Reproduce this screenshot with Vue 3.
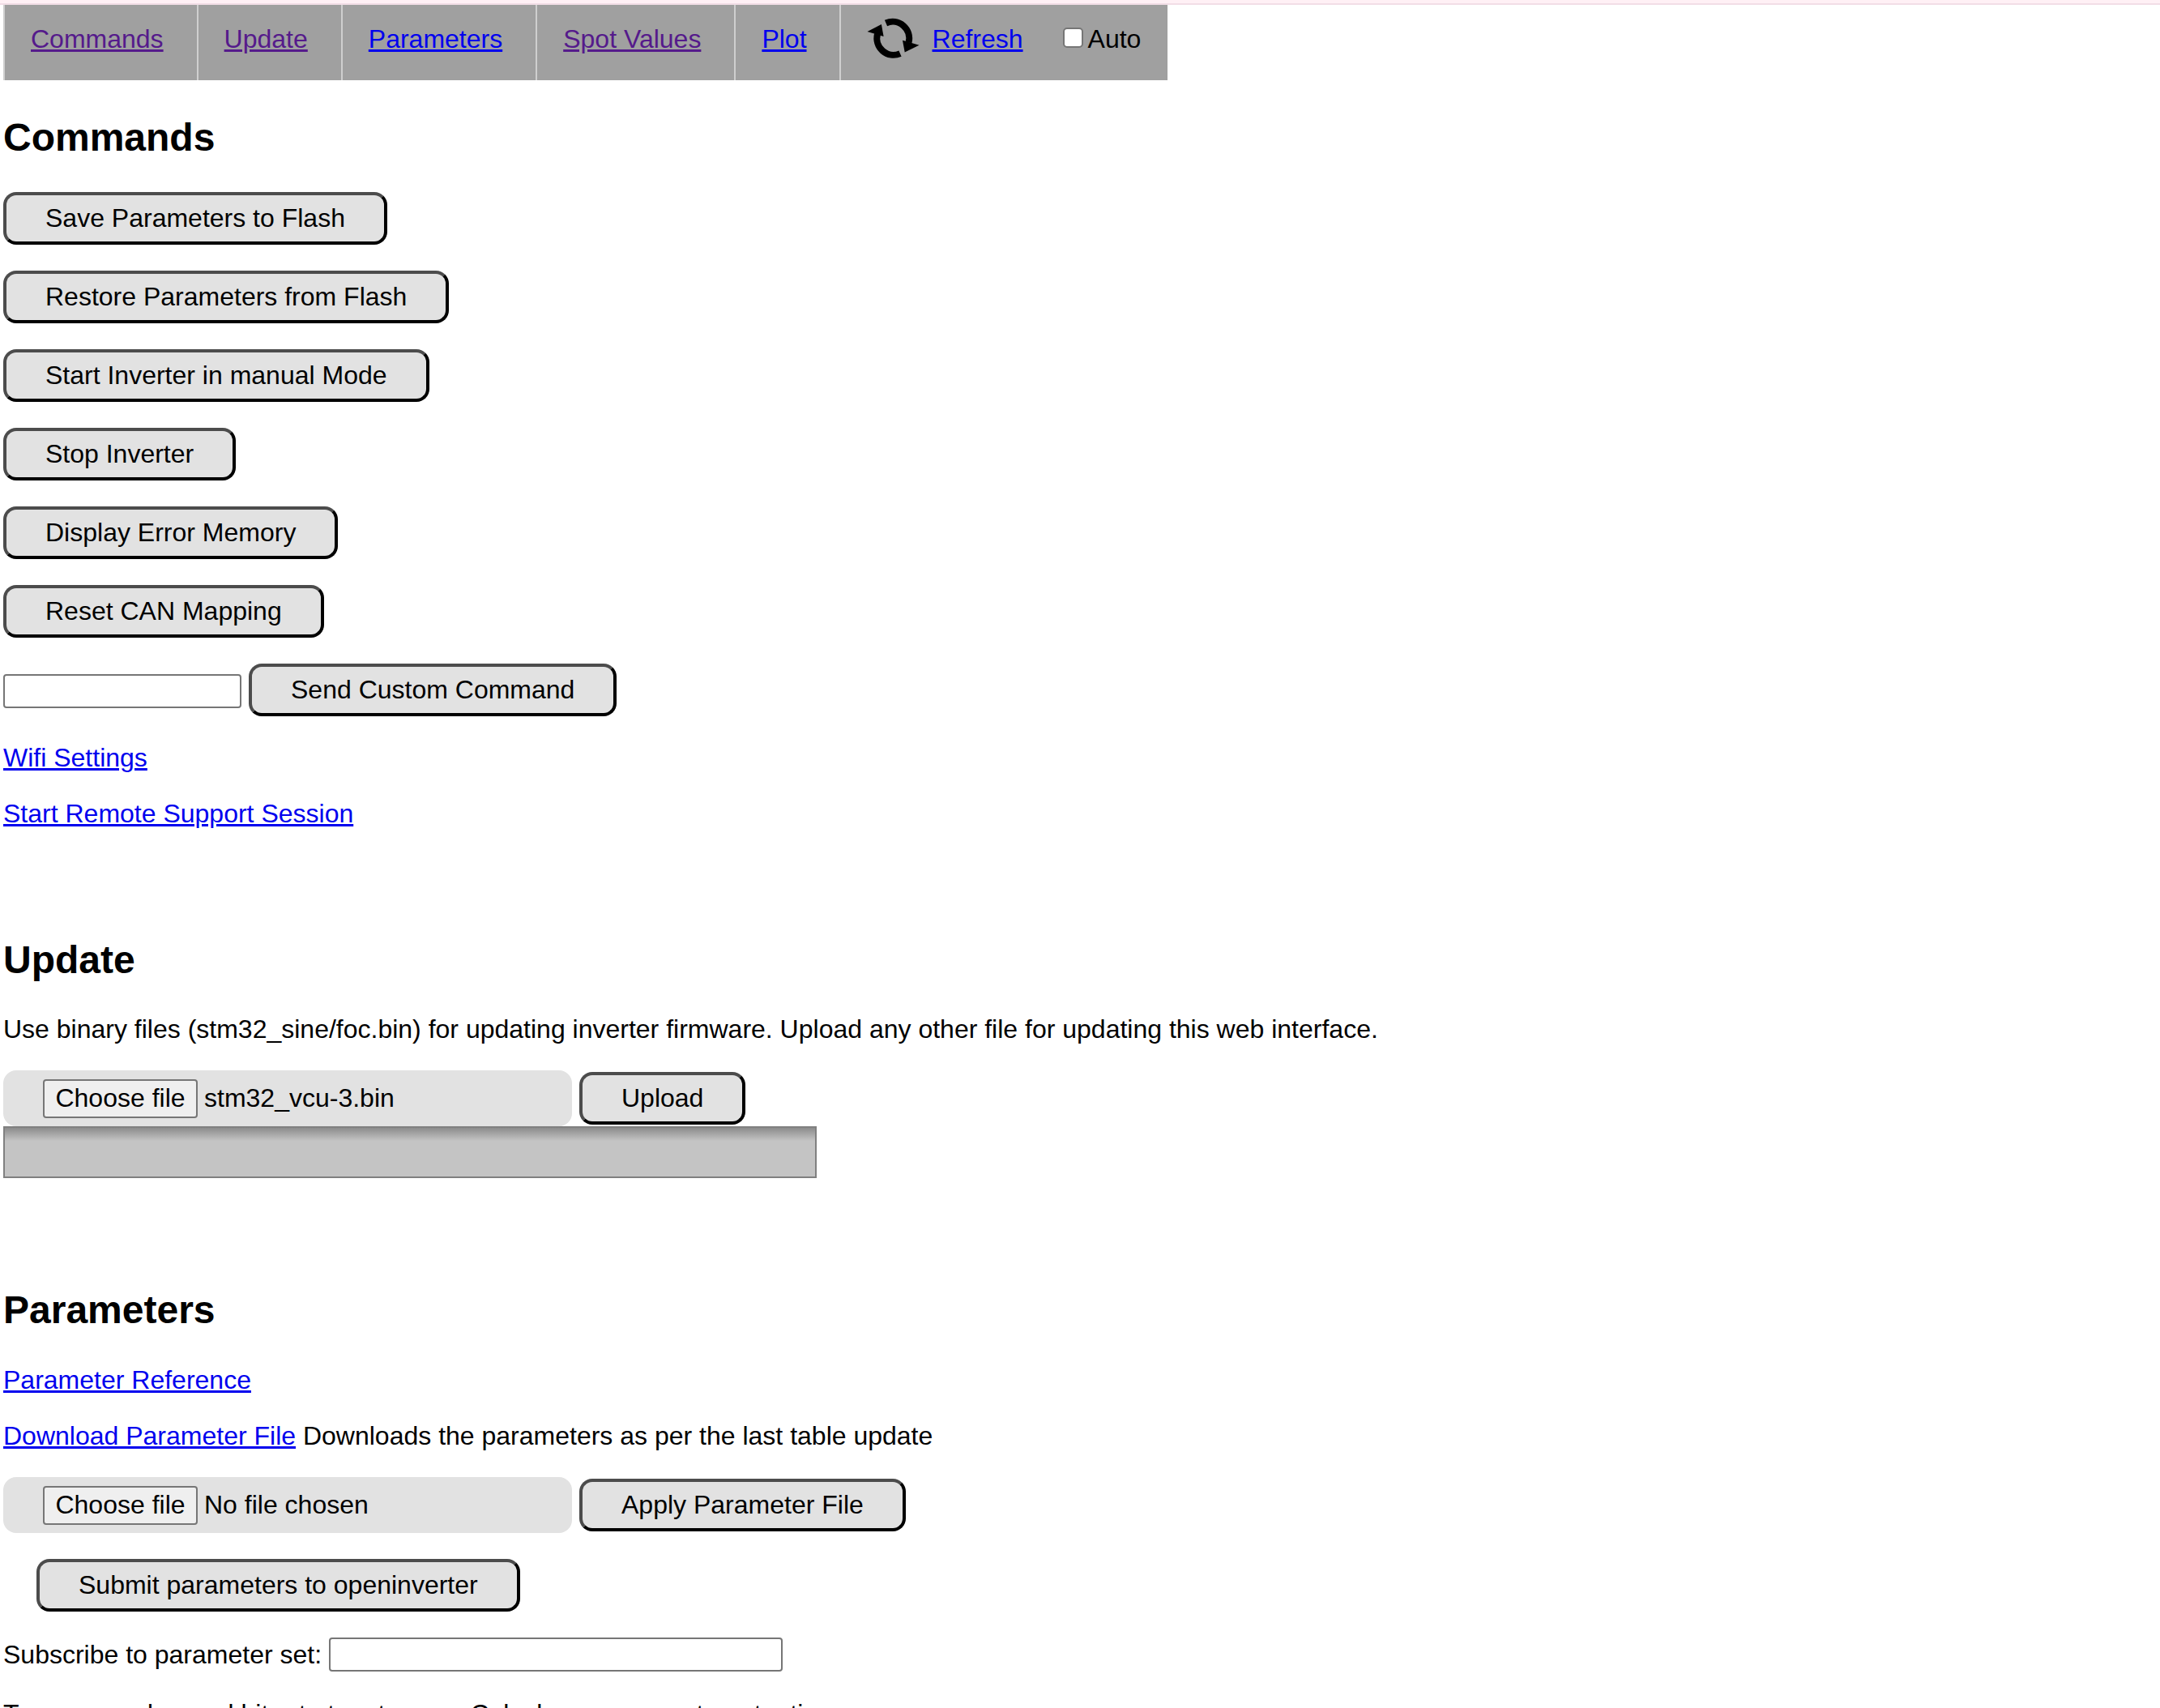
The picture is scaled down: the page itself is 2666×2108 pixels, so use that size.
<script setup>
const navItems = [
  { label: 'Commands', visited: true },
  { label: 'Update', visited: true },
  { label: 'Parameters', visited: false },
  { label: 'Spot Values', visited: true },
  { label: 'Plot', visited: false },
]
const commands = [
  'Save Parameters to Flash',
  'Restore Parameters from Flash',
  'Start Inverter in manual Mode',
  'Stop Inverter',
  'Display Error Memory',
  'Reset CAN Mapping',
]
</script>

<template>
  <div class="page">
    <div class="topline"></div>
    <div class="content">
      <nav class="nav">
        <div v-for="item in navItems" :key="item.label" class="nav-item">
          <a href="#" :class="{ visited: item.visited }">{{ item.label }}</a>
        </div>
        <div class="nav-item nav-refresh">
          <svg class="refresh-icon" width="64" height="64" viewBox="0 0 64 64" aria-hidden="true">
            <path d="M22.5 13.5A20.5 20.5 0 0 1 50.5 37.5" fill="none" stroke="#000" stroke-width="8" />
            <path d="M43 34.7L63.5 40.7L45.7 49.5Z" fill="#000" />
            <path d="M40 51.1A20.5 20.5 0 0 1 12 27.1" fill="none" stroke="#000" stroke-width="8" />
            <path d="M19.6 29.9L-0.5 24L16.9 15.1Z" fill="#000" />
          </svg>
          <a href="#">Refresh</a>
          <label class="auto"><input type="checkbox" class="check" />Auto</label>
        </div>
      </nav>

      <h2 class="first">Commands</h2>
      <div v-for="c in commands" :key="c" class="cmd-row">
        <button class="btn">{{ c }}</button>
      </div>
      <div class="custom-row">
        <input class="text-input custom-input" type="text" />
        <button class="btn">Send Custom Command</button>
      </div>
      <p><a href="#">Wifi Settings</a></p>
      <p><a href="#">Start Remote Support Session</a></p>

      <h2 class="update">Update</h2>
      <p>Use binary files (stm32_sine/foc.bin) for updating inverter firmware. Upload any other file for updating this web interface.</p>
      <div class="file-row">
        <div class="file-box">
          <span class="choose">Choose file</span>
          <span class="file-name">stm32_vcu-3.bin</span>
        </div>
        <button class="btn">Upload</button>
      </div>
      <div class="progress"></div>

      <h2 class="params">Parameters</h2>
      <p><a href="#">Parameter Reference</a></p>
      <p><a href="#">Download Parameter File</a> Downloads the parameters as per the last table update</p>
      <div class="file-row">
        <div class="file-box">
          <span class="choose">Choose file</span>
          <span class="file-name">No file chosen</span>
        </div>
        <button class="btn">Apply Parameter File</button>
      </div>
      <div class="submit-row">
        <button class="btn">Submit parameters to openinverter</button>
      </div>
      <div class="subscribe-row">
        <label>Subscribe to parameter set:</label>
        <input class="text-input subscribe-input" type="text" />
      </div>
      <p class="last">To reuse and or and bit rate to a tenson. Calculus use some tune tention</p>
    </div>
  </div>
</template>

<style scoped>
.page {
  height: 2108px;
  overflow: hidden;
  background: #fff;
  color: #000;
  font-family: "Liberation Sans", Arial, sans-serif;
  font-size: 32px;
  line-height: 37px;
}
.topline {
  height: 4px;
  background: #fff0f5;
  border-bottom: 2px solid #f2dde6;
}
.content {
  padding: 0 4px;
}
a {
  color: #0000ee;
  text-decoration: underline;
}
a.visited {
  color: #551a8b;
}
.nav {
  display: flex;
  width: fit-content;
  height: 93px;
  background: #a0a0a0;
}
.nav-item {
  border-left: 2px solid #cfcfcf;
  padding: 24px 41px 0 32px;
}
.nav-item:nth-child(5) {
  padding-right: 40px;
}
.nav-refresh {
  display: flex;
  align-items: flex-start;
  padding-right: 33px;
}
.refresh-icon {
  flex: none;
  margin: -15px 0 0 1px;
  overflow: visible;
  filter: blur(0.7px);
}
.nav-refresh a {
  margin-left: 16px;
}
.auto {
  display: flex;
  align-items: flex-start;
  margin-left: 49px;
}
.check {
  appearance: none;
  box-sizing: border-box;
  width: 25px;
  height: 25px;
  margin: 4px 6px 0 0;
  background: #fff;
  border: 2px solid #767676;
  border-radius: 5px;
}
h2 {
  margin: 0 0 40px;
  font-size: 48px;
  line-height: 55px;
  font-weight: 700;
}
h2.first {
  margin-top: 43px;
}
h2.update {
  margin-top: 134px;
}
h2.params {
  margin-top: 135px;
  margin-bottom: 41px;
}
p {
  margin: 0 0 32px;
}
.btn {
  box-sizing: border-box;
  height: 65px;
  padding: 0 48px;
  background: #e2e2e2;
  color: #000;
  font: inherit;
  border-width: 4px;
  border-style: solid;
  border-color: #4c4c4c #000 #000 #4c4c4c;
  border-radius: 16px;
}
.cmd-row {
  display: flex;
  margin-bottom: 32px;
}
.custom-row {
  display: flex;
  align-items: center;
  gap: 9px;
  margin-bottom: 33px;
}
.text-input {
  box-sizing: border-box;
  height: 42px;
  background: #fff;
  border: 2px solid #767676;
  border-radius: 4px;
}
.custom-input {
  width: 294px;
  margin-top: 3px;
}
.file-row {
  display: flex;
  align-items: center;
  gap: 9px;
}
.file-box {
  box-sizing: border-box;
  display: flex;
  align-items: center;
  width: 702px;
  height: 69px;
  padding-left: 49px;
  background: #e2e2e2;
  border-radius: 16px;
}
.choose {
  box-sizing: border-box;
  display: flex;
  align-items: center;
  justify-content: center;
  width: 191px;
  height: 48px;
  background: #efefef;
  border: 2px solid #767676;
  border-radius: 4px;
}
.file-name {
  margin-left: 8px;
}
.progress {
  box-sizing: border-box;
  width: 1004px;
  height: 64px;
  border: 2px solid #808080;
  background: linear-gradient(#8c8c8c, #c4c4c4 16px);
}
.submit-row {
  display: flex;
  margin: 32px 0 32px 41px;
}
.subscribe-row {
  display: flex;
  align-items: center;
  gap: 9px;
  margin-bottom: 34px;
}
.subscribe-input {
  width: 560px;
}
.last {
  white-space: nowrap;
}
</style>

<style>
html, body {
  margin: 0;
  overflow: hidden;
}
</style>
